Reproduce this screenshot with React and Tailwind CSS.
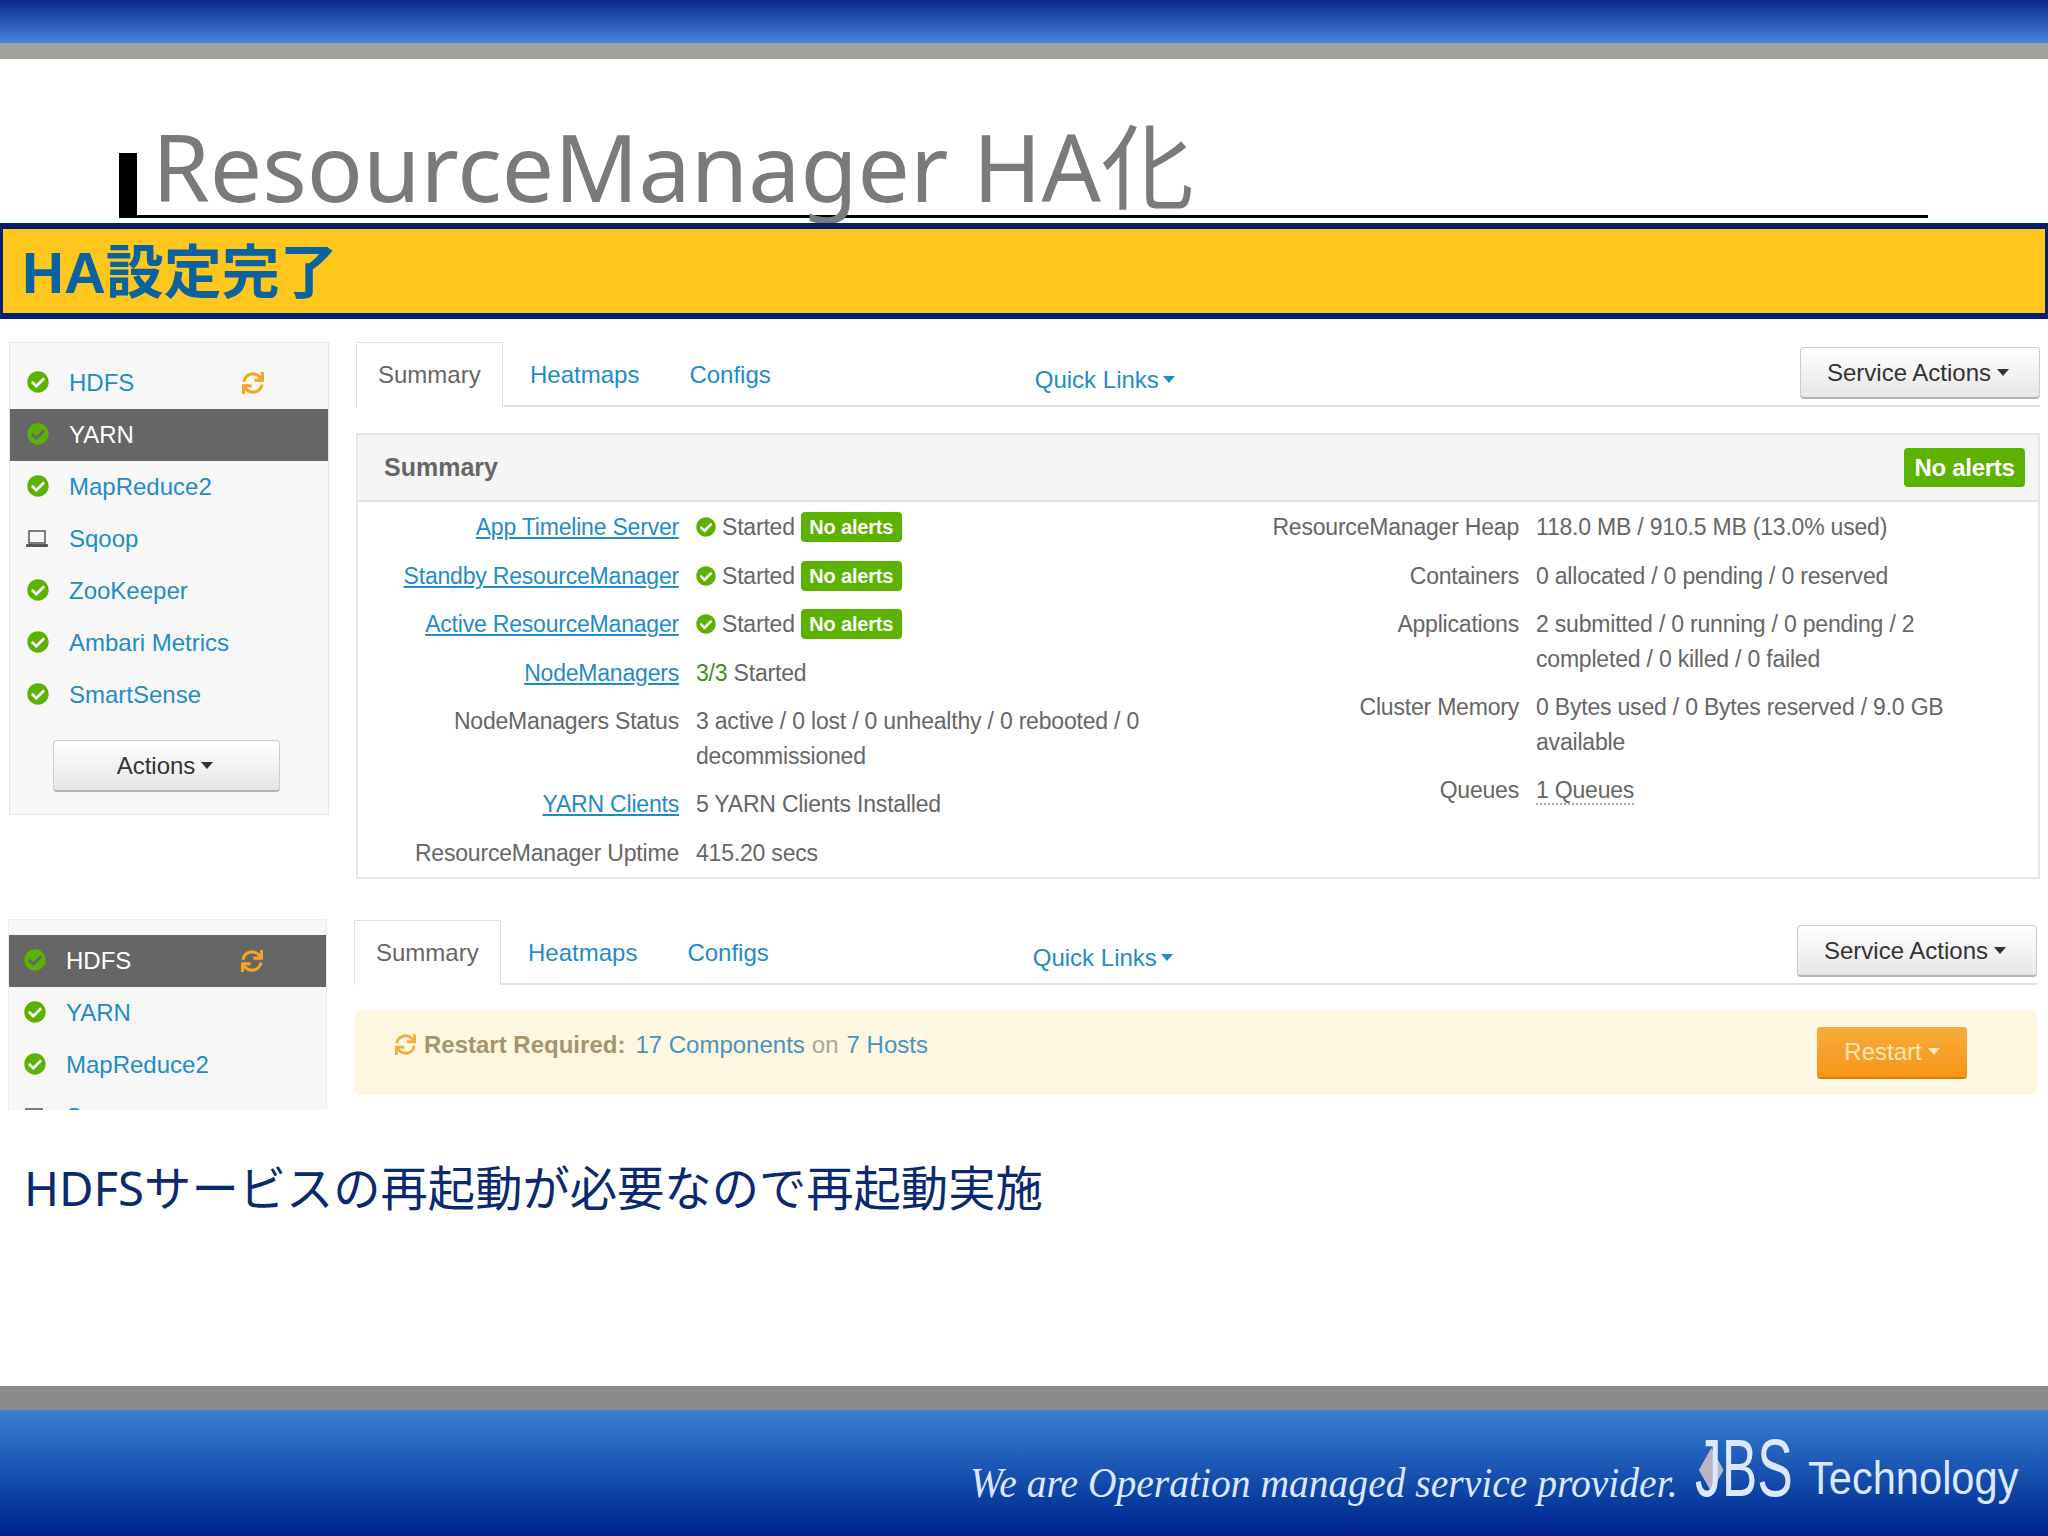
import React from 'react';
import { FaCheckCircle, FaSync } from 'react-icons/fa';

const services = ['HDFS', 'YARN', 'MapReduce2', 'Sqoop', 'ZooKeeper', 'Ambari Metrics', 'SmartSense'];

function Caret({ color = 'border-t-[#333]' }) {
  return <span className={`inline-block w-0 h-0 border-x-[6px] border-x-transparent border-t-[7px] ${color}`} />;
}

function Laptop() {
  return (
    <svg width="24" height="18" viewBox="0 0 24 18" fill="none" className="ml-[-2px]">
      <rect x="4" y="1" width="16" height="12" fill="none" stroke="#555" strokeWidth="1.5" />
      <rect x="1" y="14" width="22" height="3" rx="1" fill="#555" />
    </svg>
  );
}

function ServiceRow({ name, active, restart, lower }) {
  return (
    <div className={`h-[52px] flex items-center ${lower ? 'pl-[15px]' : 'pl-[17px]'} ${active ? 'bg-[#666]' : ''}`}>
      <span className="w-[42px] shrink-0 flex">
        {name === 'Sqoop' ? <Laptop /> : <FaCheckCircle className="text-[22px] text-[#5cb200] mb-[3px]" />}
      </span>
      <span className={`text-[24px] ${active ? 'text-white' : 'text-[#1f8cc6]'}`}>{name}</span>
      {restart && <FaSync className="absolute left-[232px] text-[22px] text-[#f5a623]" />}
    </div>
  );
}

function Tabs() {
  return (
    <div className="h-[65px] flex items-start border-b-2 border-[#e2e2e2]">
      <div className="h-[65px] w-[147px] pl-[21px] pt-[14px] border border-b-0 border-[#e0e0e0] bg-white text-[24px] leading-[35px] text-[#666]">Summary</div>
      <a className="ml-[27px] mt-[15px] text-[24px] leading-[35px] text-[#1f8cc6]">Heatmaps</a>
      <a className="ml-[50px] mt-[15px] text-[24px] leading-[35px] text-[#1f8cc6]">Configs</a>
      <a className="ml-[264px] mt-[20px] text-[24px] leading-[35px] text-[#1f8cc6] flex items-center gap-[4px]">
        Quick Links <Caret color="border-t-[#1f8cc6]" />
      </a>
      <button className="ml-auto mt-[5px] w-[240px] h-[52px] pr-[4px] rounded-[4px] border border-[#ccc] border-b-[2px] border-b-[#b5b5b5] bg-linear-to-b from-white to-[#e6e6e6] text-[24px] text-[#333] flex items-center justify-center gap-[6px]">
        Service Actions <Caret />
      </button>
    </div>
  );
}

function Started() {
  return (
    <span className="flex items-center">
      <FaCheckCircle className="text-[20px] text-[#5cb200] shrink-0" />
      <span className="ml-[6px]">Started</span>
      <span className="ml-[6px] h-[30px] w-[101px] text-center rounded-[4px] bg-[#5cb200] text-white text-[20px] font-bold leading-[30px]">No alerts</span>
    </span>
  );
}

function Row({ label, link, labelWidth, children }) {
  return (
    <div className="flex gap-[17px] mb-[14px] leading-[34.5px]">
      <div className={`${labelWidth} text-right shrink-0`}>
        {link ? <a className="text-[#1f8cc6] underline underline-offset-2">{label}</a> : label}
      </div>
      <div className="w-[470px]">{children}</div>
    </div>
  );
}

export default function App() {
  return (
    <div className="w-[2048px] h-[1536px] flex flex-col bg-white overflow-hidden font-['Liberation_Sans',sans-serif] text-[#666]">
      <div className="h-[43px] bg-linear-to-b from-[#0a2a8c] to-[#4a82dc]" />
      <div className="h-[16px] bg-[#a0a29e]" />

      <div className="h-[159px] pl-[119px] pr-[120px] flex items-end">
        <div className="w-[18px] h-[65px] bg-black" />
        <div className="flex-1 border-b-[3px] border-black h-[90px] pl-[15px]">
          <div className="text-[93px] leading-[90px] mt-[-7px] text-[#7a7a7c] whitespace-nowrap font-['Noto_Sans','Noto_Sans_CJK_JP',sans-serif]">ResourceManager HA化</div>
        </div>
      </div>

      <div className="mt-[5px] h-[96px] border-y-[6px] border-x-[3px] border-[#04206a] bg-[#ffc61e] pl-[19px] flex items-center">
        <span className="text-[58px] font-bold text-[#0a62a0] mt-[2px] font-['Liberation_Sans','Noto_Sans_CJK_JP',sans-serif]">HA設定完了</span>
      </div>

      <div className="mt-[23px] pl-[9px] flex items-start">
        <div className="relative w-[320px] h-[473px] pt-[14px] border border-[#e6e6e6] bg-[#f7f7f7]">
          {services.map(s => <ServiceRow key={s} name={s} active={s === 'YARN'} restart={s === 'HDFS'} />)}
          <button className="mt-[19px] ml-[43px] w-[227px] h-[52px] pr-[3px] rounded-[4px] border border-[#ccc] border-b-[2px] border-b-[#b5b5b5] bg-linear-to-b from-white to-[#e6e6e6] text-[24px] text-[#333] flex items-center justify-center gap-[6px]">
            Actions <Caret />
          </button>
        </div>

        <div className="ml-[27px] w-[1684px]">
          <Tabs />
          <div className="mt-[26px] h-[446px] border-2 border-[#e6e6e6]">
            <div className="h-[67px] bg-[#f5f5f5] border-b-2 border-[#e2e2e2] pl-[26px] pr-[13px] flex items-center justify-between">
              <span className="text-[25px] font-bold text-[#666]">Summary</span>
              <span className="h-[39px] w-[121px] rounded-[4px] bg-[#5cb200] text-white text-[24px] font-bold tracking-[-0.3px] flex items-center justify-center">No alerts</span>
            </div>
            <div className="pt-[8px] flex text-[23px] tracking-[-0.2px]">
              <div className="w-[809px]">
                <Row labelWidth="w-[321px]" label="App Timeline Server" link><Started /></Row>
                <Row labelWidth="w-[321px]" label="Standby ResourceManager" link><Started /></Row>
                <Row labelWidth="w-[321px]" label="Active ResourceManager" link><Started /></Row>
                <Row labelWidth="w-[321px]" label="NodeManagers" link><span className="text-[#3f8f1f]">3/3</span> Started</Row>
                <Row labelWidth="w-[321px]" label="NodeManagers Status">3 active / 0 lost / 0 unhealthy / 0 rebooted / 0 decommissioned</Row>
                <Row labelWidth="w-[321px]" label="YARN Clients" link>5 YARN Clients Installed</Row>
                <Row labelWidth="w-[321px]" label="ResourceManager Uptime">415.20 secs</Row>
              </div>
              <div className="flex-1">
                <Row labelWidth="w-[352px]" label="ResourceManager Heap">118.0 MB / 910.5 MB (13.0% used)</Row>
                <Row labelWidth="w-[352px]" label="Containers">0 allocated / 0 pending / 0 reserved</Row>
                <Row labelWidth="w-[352px]" label="Applications">2 submitted / 0 running / 0 pending / 2 completed / 0 killed / 0 failed</Row>
                <Row labelWidth="w-[352px]" label="Cluster Memory">0 Bytes used / 0 Bytes reserved / 9.0 GB available</Row>
                <Row labelWidth="w-[352px]" label="Queues"><span className="border-b-2 border-dotted border-[#aaa]">1 Queues</span></Row>
              </div>
            </div>
          </div>
        </div>
      </div>

      <div className="mt-[40px] pl-[8px] flex items-start h-[191px] overflow-hidden">
        <div className="relative w-[319px] h-[400px] pt-[15px] border border-[#ececec] bg-[#f7f7f7]">
          {services.slice(0, 4).map(s => <ServiceRow key={s} name={s} lower active={s === 'HDFS'} restart={s === 'HDFS'} />)}
        </div>
        <div className="ml-[27px] w-[1683px] pt-[1px]">
          <Tabs />
          <div className="mt-[25px] h-[85px] rounded-[6px] bg-[#fdf6e0] pl-[41px] pr-[70px] flex items-center justify-between">
            <div className="flex items-center text-[24px] mb-[16px]">
              <FaSync className="text-[21px] text-[#f0b040] mr-[8px]" />
              <span className="font-bold text-[#a8946c]">Restart Required:</span>
              <span className="ml-[10px] text-[#4a93c0]">17 Components</span>
              <span className="ml-[7px] text-[#a8a8a0]">on</span>
              <span className="ml-[8px] text-[#4a93c0]">7 Hosts</span>
            </div>
            <button className="w-[150px] h-[52px] rounded-[4px] bg-linear-to-b from-[#f8ab3c] to-[#f7960f] border-b-2 border-b-[#c9801e] text-[24px] text-[#ffe6b8] flex items-center justify-center gap-[6px]">
              Restart <Caret color="border-t-[#ffe6b8]" />
            </button>
          </div>
        </div>
      </div>

      <div className="mt-[50px] pl-[24px] text-[47.3px] leading-[56px] text-[#0b2a6e] whitespace-nowrap font-['Noto_Sans','Noto_Sans_CJK_JP',sans-serif]">
        HDFSサービスの再起動が必要なので再起動実施
      </div>

      <div className="mt-auto h-[24px] bg-[#8a8a8a]" />
      <div className="h-[126px] bg-linear-to-b from-[#3a80d4] to-[#02208c] flex items-end justify-end pr-[30px] pb-[28px] text-[#dbe8ff] whitespace-nowrap">
        <span className="w-[705px] italic text-[43px] leading-[50px] scale-x-[0.92] origin-left font-['Liberation_Serif',serif]">We are Operation managed service provider.</span>
        <span className="relative ml-[20px] w-[97px] text-[82px] leading-[76px] mb-[2px] scale-x-[0.65] origin-left">
          <svg width="38" height="44" viewBox="0 0 38 44" className="absolute left-[6px] top-[18px]">
            <polygon points="19,0 38,22 19,44 0,22" fill="#b9b6c2" />
          </svg>
          <span className="relative">JBS</span>
        </span>
        <span className="ml-[16px] w-[210px] text-[47px] leading-[56px] scale-x-[0.885] origin-left mb-[2px]">Technology</span>
      </div>
    </div>
  );
}
